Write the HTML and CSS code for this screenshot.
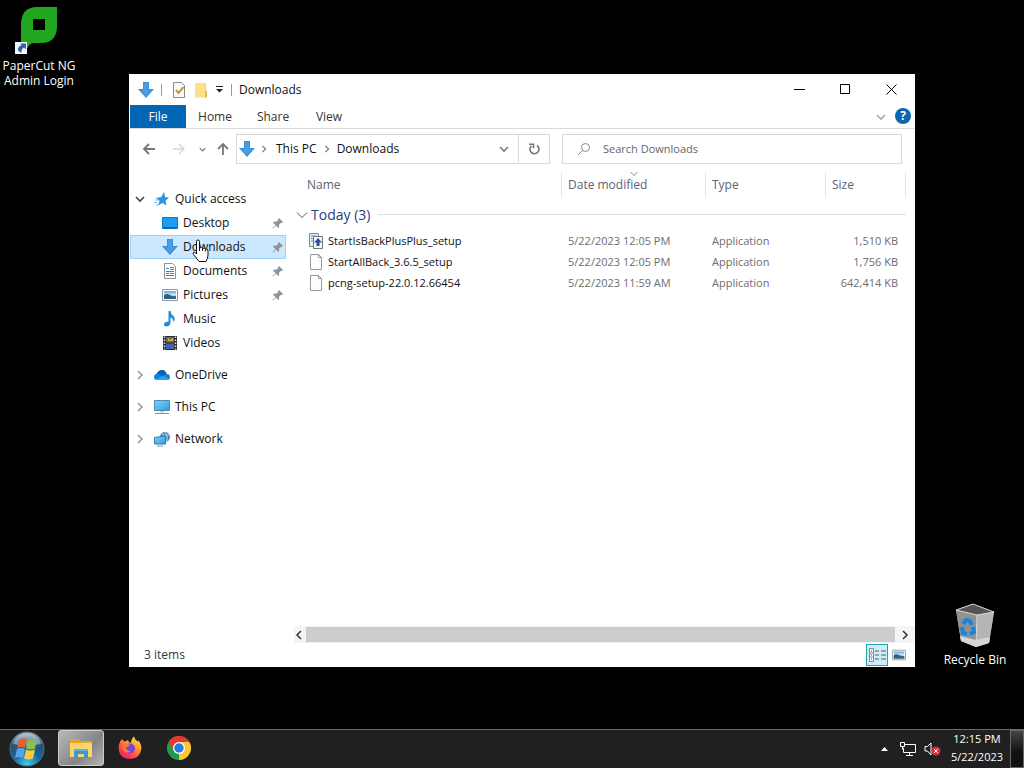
FILE: index.html
```html
<!DOCTYPE html>
<html lang="en">
    <head>
        <meta charset="utf-8">
        <title>Downloads</title>
        <link rel="stylesheet" href="styles.css">
    </head>
    <body>
        <!-- shared icons -->
        <svg class="sprite" aria-hidden="true">
            <defs>
                <linearGradient id="sky" x1="0" y1="0" x2="1" y2="1">
                    <stop offset="0" stop-color="#7fd4fb"/>
                    <stop offset="1" stop-color="#2c9be0"/>
                </linearGradient>
                <linearGradient id="photo" x1="0" y1="0" x2="0" y2="1">
                    <stop offset="0" stop-color="#5ba4dc"/>
                    <stop offset=".5" stop-color="#d5ebf7"/>
                    <stop offset="1" stop-color="#31506b"/>
                </linearGradient>
            </defs>
            <symbol id="arrow-down" viewBox="0 0 16 16">
                <path d="M5 0h6v7h5l-8 9-8-9h5z" fill="#3a8fd9"/>
                <path d="M6 1h4v7h3.500l-5.500 6-5.500-6H6z" fill="#4a9de2"/>
            </symbol>
            <symbol id="chev-right" viewBox="0 0 10 10">
                <path d="M3 1l4 4-4 4" fill="none" stroke="currentColor" stroke-width="1.500"/>
            </symbol>
            <symbol id="chev-down" viewBox="0 0 10 10">
                <path d="M1 3l4 4 4-4" fill="none" stroke="currentColor" stroke-width="1.600"/>
            </symbol>
            <symbol id="pin" viewBox="0 0 12 12">
                <path d="M7 1l4 4-1 1-1-.3-2 2 .2 2.300-1 1L4 8.500 1 11.500l-.5-.5 3-3L1 5.500l1-1 2.300.2 2-2L6 2z" fill="#8b949c"/>
            </symbol>
            <symbol id="file" viewBox="0 0 14 16">
                <path d="M1.500.5h8l3 3v12h-11z" fill="#fdfdfd" stroke="#999"/>
                <path d="M9.500.5v3h3" fill="none" stroke="#999"/>
            </symbol>
            <symbol id="picture" viewBox="0 0 16 12">
                <path d="M.5.5h15v11H.5z" fill="#fff" stroke="#8a98a5"/>
                <path d="M2 2h12v8H2z" fill="url(#photo)"/>
                <path d="M2 6q3-2 6 0t6 1v3H2z" fill="#35607f"/>
            </symbol>
        </svg>

        <main class="desktop">
            <a class="shortcut papercut" href="#">
                <svg width="44" height="50" viewBox="0 0 44 50">
                    <path d="M7 20Q7 2 23 2h20v19q0 17-16 17h-7q-4 0-6 4l-3 4H7z" fill="#22a61f"/>
                    <path d="M19 14h12v11H19z" fill="#000"/>
                    <path d="M1 37h12v12H1z" fill="#f4f6f8"/>
                    <path d="M6 38.500h6v6l-2-2q-3 2-2.500 5-4-1-3.500-4 .5-2 3.500-3.500z" fill="#2d62ad"/>
                </svg>
                <span>PaperCut NG Admin Login</span>
            </a>

            <a class="shortcut recycle" href="#">
                <svg width="40" height="46" viewBox="0 0 40 46">
                    <path d="M1 7l17-6 21 8-5 31-13 4-15-6z" fill="#a2a4a5"/>
                    <path d="M1 7l17-6 21 8-17 3z" fill="#555"/>
                    <path d="M1 7l21 5-1 32-15-6z" fill="#8f9293"/>
                    <path d="M22 12l17-3-5 31-13 4z" fill="#b4b6b6"/>
                    <path d="M5 33l16 4 14-3-1 6-13 4-15-6z" fill="#d5d7d6"/>
                    <path d="M1 7l17-6 21 8-17 3zM22 12l-1 32" fill="none" stroke="#d6d8d8"/>
                    <g fill="none" stroke="#1685dc" stroke-width="4">
                        <path d="M8 21l3-4 4 1 2 4"/>
                        <path d="M7 24l1 6 4 1"/>
                        <path d="M15 31l4-2-1-5"/>
                    </g>
                </svg>
                <span>Recycle Bin</span>
            </a>

            <section class="window">
                <header class="titlebar">
                    <svg class="app-icon" width="16" height="16"><use href="#arrow-down"/></svg>
                    <i class="sep"></i>
                    <button class="quick" aria-label="Properties">
                        <svg width="14" height="16" viewBox="0 0 14 16">
                            <path d="M1.500.5h8l3 3v12h-11z" fill="#fbfbfb" stroke="#888"/>
                            <path d="M4 8l2.500 3 5-6" fill="none" stroke="#c59a32" stroke-width="2"/>
                        </svg>
                    </button>
                    <button class="quick" aria-label="New folder">
                        <svg width="14" height="16" viewBox="0 0 14 16">
                            <path d="M1 1h11v7l1 1v6.500H1z" fill="#f8d775"/>
                            <path d="M1 1h10v14H1z" fill="#ffe08a"/>
                            <path d="M11 9h2v6.500h-2z" fill="#e6b94a"/>
                        </svg>
                    </button>
                    <button class="quick-menu" aria-label="Customize toolbar">
                        <svg width="7" height="7" viewBox="0 0 7 7"><path d="M0 0h7v1H0zM0 3h7L3.500 6.500z" fill="#222"/></svg>
                    </button>
                    <i class="sep"></i>
                    <h1>Downloads</h1>
                    <div class="controls">
                        <button aria-label="Minimize"><svg width="11" height="11" viewBox="0 0 11 11"><path d="M0 5.500h11" stroke="#000"/></svg></button>
                        <button aria-label="Maximize"><svg width="11" height="11" viewBox="0 0 11 11"><path d="M.5.5h9v9h-9z" fill="none" stroke="#000"/></svg></button>
                        <button aria-label="Close"><svg width="11" height="11" viewBox="0 0 11 11"><path d="M.5.5l10 10M10.500.5l-10 10" stroke="#000"/></svg></button>
                    </div>
                </header>

                <nav class="ribbon">
                    <button class="tab file">File</button>
                    <button class="tab">Home</button>
                    <button class="tab">Share</button>
                    <button class="tab view-tab">View</button>
                    <button class="expand" aria-label="Expand ribbon"><svg width="10" height="10"><use href="#chev-down"/></svg></button>
                    <button class="help" aria-label="Help">?</button>
                </nav>

                <div class="toolbar">
                    <button class="go" aria-label="Back">
                        <svg width="14" height="12" viewBox="0 0 14 12"><path d="M13 6H2M7 1L2 6l5 5" fill="none" stroke="#777" stroke-width="1.800"/></svg>
                    </button>
                    <button class="go" aria-label="Forward">
                        <svg width="14" height="12" viewBox="0 0 14 12"><path d="M1 6h11M7 1l5 5-5 5" fill="none" stroke="#d5d5d5" stroke-width="1.400"/></svg>
                    </button>
                    <button class="recent" aria-label="Recent locations"><svg width="7" height="7"><use href="#chev-down"/></svg></button>
                    <button class="up" aria-label="Up">
                        <svg width="12" height="14" viewBox="0 0 12 14"><path d="M6 13V2M1 7l5-5 5 5" fill="none" stroke="#777" stroke-width="1.800"/></svg>
                    </button>
                    <div class="address">
                        <svg width="16" height="16"><use href="#arrow-down"/></svg>
                        <svg class="crumb-sep" width="8" height="8"><use href="#chev-right"/></svg>
                        <button class="crumb">This PC</button>
                        <svg class="crumb-sep" width="8" height="8"><use href="#chev-right"/></svg>
                        <button class="crumb">Downloads</button>
                        <button class="history" aria-label="Previous locations"><svg width="10" height="10"><use href="#chev-down"/></svg></button>
                        <button class="refresh" aria-label="Refresh">
                            <svg width="12" height="12" viewBox="0 0 12 12">
                                <path d="M9 2.500a4.500 4.500 0 1 1-5.500.3" fill="none" stroke="#777" stroke-width="1.600"/>
                                <path d="M1 1.300h4.500v4" fill="none" stroke="#777" stroke-width="1.600"/>
                            </svg>
                        </button>
                    </div>
                    <label class="search">
                        <svg width="14" height="14" viewBox="0 0 14 14">
                            <circle cx="8.500" cy="5.500" r="4" fill="none" stroke="#888"/>
                            <path d="M5.500 8.500L1 13" stroke="#888"/>
                        </svg>
                        <input type="text" placeholder="Search Downloads" aria-label="Search Downloads">
                    </label>
                </div>

                <div class="body">
                    <nav class="tree">
                        <ul>
                            <li>
                                <a href="#">
                                    <svg class="twist open" width="10" height="10"><use href="#chev-down"/></svg>
                                    <svg class="icon" width="16" height="16" viewBox="0 0 16 16">
                                        <path d="M10 1l1 5 4 .7-3.500 3 1 4.800L8.500 12 4 14.500 5.500 10 2 6.700l5-.5z" fill="#2d96e0"/>
                                        <path d="M1 9h3M0 11.500h3M2 14h2" stroke="#71b9ea"/>
                                    </svg>
                                    Quick access
                                </a>
                                <ul>
                                    <li><a href="#">
                                        <svg class="icon" width="16" height="16" viewBox="0 0 16 16"><path d="M.5 2.500h15v11H.5z" fill="#1a9df2" stroke="#0b79c8"/><path d="M1 12h14v1.500H1z" fill="#0c68ab"/></svg>
                                        Desktop
                                        <svg class="pin" width="12" height="12"><use href="#pin"/></svg>
                                    </a></li>
                                    <li><a class="selected" href="#">
                                        <svg class="icon" width="16" height="16"><use href="#arrow-down"/></svg>
                                        Downloads
                                        <svg class="pin" width="12" height="12"><use href="#pin"/></svg>
                                    </a></li>
                                    <li><a href="#">
                                        <svg class="icon" width="16" height="16" viewBox="0 0 16 16">
                                            <path d="M2.500.5h8l3 3v12h-11z" fill="#fff" stroke="#8794a0"/>
                                            <path d="M4 5.500h3M8 4.500h4M8 6.500h4M4 8.500h8M4 10.500h3M8 10.500h4M4 12.500h8" stroke="#3f86bf"/>
                                        </svg>
                                        Documents
                                        <svg class="pin" width="12" height="12"><use href="#pin"/></svg>
                                    </a></li>
                                    <li><a href="#">
                                        <svg class="icon" width="16" height="12"><use href="#picture"/></svg>
                                        Pictures
                                        <svg class="pin" width="12" height="12"><use href="#pin"/></svg>
                                    </a></li>
                                    <li><a href="#">
                                        <svg class="icon" width="16" height="16" viewBox="0 0 16 16">
                                            <path d="M6.500 0h2q0 3 3 5 2.500 2.500 0 6.500 0-4-3-5V12q-1 3.500-4 3.500-3-.3-2.500-2.500.5-2.500 4.500-2.500z" fill="#1f8fdb"/>
                                        </svg>
                                        Music
                                    </a></li>
                                    <li><a href="#">
                                        <svg class="icon" width="16" height="16" viewBox="0 0 16 16">
                                            <path d="M1 1h14v14H1z" fill="#2a2a2e"/>
                                            <path d="M4 2h8v5.500H4z" fill="#6b7053"/>
                                            <path d="M4 8.500h8V14H4z" fill="#4761ad"/>
                                            <path d="M6 3l2 2 3-2v3H6z" fill="#c6b54d"/>
                                            <path d="M2.500 1.500v13M13.500 1.500v13" stroke="#e8e8e8" stroke-width="1.500" stroke-dasharray="1.500 1.500"/>
                                        </svg>
                                        Videos
                                    </a></li>
                                </ul>
                            </li>
                            <li><a href="#">
                                <svg class="twist" width="10" height="10"><use href="#chev-right"/></svg>
                                <svg class="icon" width="16" height="16" viewBox="0 0 16 16">
                                    <path d="M3.500 13Q0 13 0 10t3-3.500Q4.500 3 8 3t4.500 4Q16 7 16 10t-3 3z" fill="#1583d8"/>
                                    <path d="M3 6.500Q4.500 3 8 3t4.500 4L8 9.500z" fill="#0b62b3"/>
                                    <path d="M2 12.500L9 8.500l6 3.500q-1 1-2 1H3.500z" fill="#29a2ea"/>
                                </svg>
                                OneDrive
                            </a></li>
                            <li><a href="#">
                                <svg class="twist" width="10" height="10"><use href="#chev-right"/></svg>
                                <svg class="icon" width="16" height="16" viewBox="0 0 16 16">
                                    <path d="M.5 1.500h15v10H.5z" fill="url(#sky)" stroke="#4c89b3"/>
                                    <path d="M6 12h4v1.500H6z" fill="#c6d0d8"/>
                                    <path d="M1 14.500h14" stroke="#7892a5"/>
                                </svg>
                                This PC
                            </a></li>
                            <li><a href="#">
                                <svg class="twist" width="10" height="10"><use href="#chev-right"/></svg>
                                <svg class="icon" width="16" height="16" viewBox="0 0 16 16">
                                    <circle cx="11" cy="6" r="5" fill="#4b86b8"/>
                                    <path d="M8 3q3 2 7 1M11 1q4 5 1 10" fill="none" stroke="#a9d4ef"/>
                                    <path d="M.5 6.500l11-1.500v8L.5 13z" fill="url(#sky)" stroke="#2e7cae"/>
                                    <path d="M3 15h6" stroke="#7892a5"/>
                                </svg>
                                Network
                            </a></li>
                        </ul>
                    </nav>

                    <div class="content">
                        <table class="files">
                            <colgroup>
                                <col>
                                <col class="col-date">
                                <col class="col-type">
                                <col class="col-size">
                            </colgroup>
                            <thead>
                                <tr>
                                    <th>Name</th>
                                    <th class="sorted">Date modified
                                        <svg class="sort" width="8" height="8" viewBox="0 0 8 8"><path d="M.5 2L4 5.500 7.500 2" fill="none" stroke="#888"/></svg>
                                    </th>
                                    <th>Type</th>
                                    <th>Size</th>
                                </tr>
                            </thead>
                            <tbody>
                                <tr class="group">
                                    <th colspan="4">
                                        <div class="group-title">
                                            <svg width="12" height="12" viewBox="0 0 12 12"><path d="M1 3.500l5 5 5-5" fill="none" stroke="#555"/></svg>
                                            Today (3)
                                        </div>
                                    </th>
                                </tr>
                                <tr>
                                    <td>
                                        <div class="name">
                                            <svg width="16" height="16" viewBox="0 0 16 16">
                                                <path d="M1.500.5h9v13h-9z" fill="#e8eef2" stroke="#7c8a96"/>
                                                <path d="M3 3h5M3 5.500h3M3 8h2" stroke="#6d94b2"/>
                                                <path d="M5.500 3.500h9v12h-9z" fill="#f4f6f8" stroke="#6d7780"/>
                                                <path d="M10 5l4 4.500h-2.500V13h-3V9.500H6z" fill="#27529b"/>
                                            </svg>
                                            StartIsBackPlusPlus_setup
                                        </div>
                                    </td>
                                    <td>5/22/2023 12:05 PM</td>
                                    <td>Application</td>
                                    <td class="size">1,510 KB</td>
                                </tr>
                                <tr>
                                    <td><div class="name"><svg width="16" height="16"><use href="#file"/></svg>StartAllBack_3.6.5_setup</div></td>
                                    <td>5/22/2023 12:05 PM</td>
                                    <td>Application</td>
                                    <td class="size">1,756 KB</td>
                                </tr>
                                <tr>
                                    <td><div class="name"><svg width="16" height="16"><use href="#file"/></svg>pcng-setup-22.0.12.66454</div></td>
                                    <td>5/22/2023 11:59 AM</td>
                                    <td>Application</td>
                                    <td class="size">642,414 KB</td>
                                </tr>
                            </tbody>
                        </table>
                        <div class="scrollbar">
                            <button aria-label="Scroll left"><svg class="flip" width="10" height="10"><use href="#chev-right"/></svg></button>
                            <div class="thumb"></div>
                            <button aria-label="Scroll right"><svg width="10" height="10"><use href="#chev-right"/></svg></button>
                        </div>
                    </div>
                </div>

                <footer class="status">
                    <span>3 items</span>
                    <button class="view active" aria-label="Details view">
                        <svg width="17" height="14" viewBox="0 0 17 14">
                            <path d="M.5.5h4v13h-4zM.5 5h4M.5 9h4" fill="#fff" stroke="#7c8d97"/>
                            <path d="M2 3h1M2 7h1M2 11h1" stroke="#345"/>
                            <path d="M6 3h4M12 3h5M6 7h4M12 7h5M6 11h4M12 11h5" stroke="#53616a"/>
                        </svg>
                    </button>
                    <button class="view" aria-label="Large icons view"><svg width="14" height="12"><use href="#picture"/></svg></button>
                </footer>
            </section>

            <svg class="pointer" width="18" height="24" viewBox="0 0 18 24">
                <path d="M4.500 15V2.500q0-1.500 1.500-1.500t1.500 1.500V9q2.500-1.500 3 .5 2-1 2.800.6 2.700-.6 2.700 1.900v4q0 3-2 6.500H7L1.500 15.500q-1-1.500.2-2.300 1-.5 2.800 1.800zM10.500 9.500V12M13.300 10.500v2M7.500 9v3" fill="#fff" stroke="#111"/>
            </svg>
        </main>

        <footer class="taskbar">
            <button class="start" aria-label="Start">
                <svg width="36" height="36" viewBox="0 0 36 36">
                    <defs>
                        <radialGradient id="orb" cx=".5" cy=".95" r=".9">
                            <stop offset="0" stop-color="#3fd0f5"/>
                            <stop offset=".45" stop-color="#11659f"/>
                            <stop offset=".8" stop-color="#2b506c"/>
                            <stop offset="1" stop-color="#8fa9b8"/>
                        </radialGradient>
                    </defs>
                    <circle cx="18" cy="18" r="17" fill="url(#orb)" stroke="#527183"/>
                    <path d="M4 13Q7 3 18 2q11 1 14 11-14 3-28 0z" fill="#cfdde5" opacity=".5"/>
                    <path d="M10 9q4-3 8-1l-2 9q-4-2-8 0z" fill="#e8602c"/>
                    <path d="M19 8.500q4 2 9 0l-2 9q-4 2-9 0z" fill="#8cc152"/>
                    <path d="M8 18q4-2 8 0l-2 9q-4-2-8 0z" fill="#58a5e4"/>
                    <path d="M17 18.500q4 2 9 0l-2 9q-4 2-9 0z" fill="#fbcb3d"/>
                </svg>
            </button>
            <button class="task active" aria-label="File Explorer">
                <svg width="24" height="20" viewBox="0 0 24 20">
                    <path d="M1 1h9l2 2h11v5H1z" fill="#e5a22c"/>
                    <path d="M1 5h22v14H1z" fill="#fcd668"/>
                    <path d="M5 20v-9h14v9h-4v-4H9v4z" fill="#3797d8"/>
                    <path d="M5 11h14v2H5z" fill="#58b3e8"/>
                </svg>
            </button>
            <button class="task" aria-label="Firefox">
                <svg width="24" height="24" viewBox="0 0 24 24">
                    <defs>
                        <linearGradient id="fox" x1=".9" y1="0" x2=".2" y2="1">
                            <stop offset="0" stop-color="#fff04a"/>
                            <stop offset=".4" stop-color="#ff9528"/>
                            <stop offset=".75" stop-color="#ff3f4e"/>
                            <stop offset="1" stop-color="#e31587"/>
                        </linearGradient>
                    </defs>
                    <path d="M4 3q1 2 3 2.500l3-1.500q0 2 3 3 0-4 3-6.500.5 3 3.500 5l1-1q4 5 2.500 10-2 8-10.500 8.500Q3 23 1 15.500-.5 8 4 3z" fill="url(#fox)"/>
                    <circle cx="12" cy="12.500" r="5" fill="#7446d8"/>
                    <path d="M5 8q4-1 7 1-1 2-4 2 0 4 5 4-4 4-8-1-2-3 0-6z" fill="#ff7a31"/>
                </svg>
            </button>
            <button class="task" aria-label="Chrome">
                <svg width="24" height="24" viewBox="0 0 24 24">
                    <path d="M12 12L1.600 6A12 12 0 0 1 22.400 6z" fill="#e33b2e"/>
                    <path d="M12 12L22.400 6A12 12 0 0 1 12 24z" fill="#fcc934"/>
                    <path d="M12 12v12A12 12 0 0 1 1.600 6z" fill="#26994a"/>
                    <path d="M12 6h10.400L17 15l-5 9 5-9z" fill="#fcc934"/>
                    <path d="M1.600 6L7 15l5 3V6z" fill="#26994a"/>
                    <path d="M1.600 6L6.500 14 12 6h10.400A12 12 0 0 0 1.600 6z" fill="#e33b2e"/>
                    <circle cx="12" cy="12" r="6" fill="#fff"/>
                    <circle cx="12" cy="12" r="4.700" fill="#2878e6"/>
                </svg>
            </button>
            <div class="tray">
                <button aria-label="Show hidden icons"><svg width="7" height="4" viewBox="0 0 7 4"><path d="M0 4l3.500-4L7 4z" fill="#fff"/></svg></button>
                <button aria-label="Network">
                    <svg width="17" height="14" viewBox="0 0 17 14">
                        <path d="M4.500 2.500h11v8H3.500V6M9.500 10.500v3M6 13.500h7" fill="none" stroke="#fff"/>
                        <path d="M.5.500h4v4h-4zM2.500 4.500v3" fill="#202020" stroke="#fff"/>
                    </svg>
                </button>
                <button aria-label="Volume muted">
                    <svg width="17" height="14" viewBox="0 0 17 14">
                        <path d="M1 4.500h2.500L7 1v12L3.500 9H1z" fill="none" stroke="#fff"/>
                        <circle cx="12" cy="9" r="4.500" fill="#d9303e"/>
                        <path d="M10 7l4 4M14 7l-4 4" stroke="#fff"/>
                    </svg>
                </button>
                <button class="clock"><time>12:15 PM<br>5/22/2023</time></button>
                <button class="show-desktop" aria-label="Show desktop"></button>
            </div>
        </footer>
    </body>
</html>
```

FILE: styles.css
```css
* {
    box-sizing: border-box;
}
body {
    margin: 0;
    height: 100vh;
    display: flex;
    flex-direction: column;
    overflow: hidden;
    background: #000;
    color: #111;
    font: 12px/16px "Open Sans", "Noto Sans", sans-serif;
}
button {
    display: flex;
    align-items: center;
    justify-content: center;
    padding: 0;
    border: 0;
    background: none;
    color: inherit;
    font: inherit;
}
a {
    color: inherit;
    text-decoration: none;
}
ul {
    margin: 0;
    padding: 0;
    list-style: none;
}
svg {
    flex: none;
}
.sprite {
    position: absolute;
    width: 0;
    height: 0;
}

/* desktop */
.desktop {
    position: relative;
    flex: 1;
}
.shortcut {
    position: absolute;
    display: flex;
    flex-direction: column;
    align-items: center;
    gap: 3px;
    color: #fff;
    line-height: 15px;
    text-align: center;
}
.papercut {
    top: 5px;
    left: 0;
    width: 78px;
}
.papercut svg {
    margin-right: 6px;
}
.recycle {
    right: 0;
    bottom: 62px;
    width: 98px;
}
.pointer {
    position: absolute;
    top: 239px;
    left: 192px;
}

/* explorer window */
.window {
    position: absolute;
    top: 74px;
    right: 109px;
    bottom: 62px;
    left: 129px;
    display: flex;
    flex-direction: column;
    background: #fff;
}
.titlebar {
    display: flex;
    align-items: center;
    height: 31px;
    padding: 0 1px 0 9px;
}
.titlebar h1 {
    margin: 0 0 0 7px;
    font-size: 12px;
    font-weight: normal;
}
.sep {
    width: 1px;
    height: 12px;
    background: #999;
}
.app-icon {
    margin-right: 7px;
}
.quick {
    width: 22px;
}
.sep + .quick {
    margin-left: 6px;
}
.quick-menu {
    width: 14px;
    margin-right: 5px;
}
.controls {
    display: flex;
    margin-left: auto;
}
.controls button {
    width: 46px;
    height: 30px;
}

.ribbon {
    display: flex;
    height: 24px;
    padding: 0 4px 0 1px;
    border-bottom: 1px solid #dadbdc;
    color: #333;
}
.tab {
    width: 58px;
}
.tab.file {
    width: 56px;
    background: #0366b5;
    color: #fff;
}
.tab.view-tab {
    width: 54px;
}
.expand {
    width: 22px;
    margin-left: auto;
    color: #aaa;
}
.help {
    width: 16px;
    height: 16px;
    margin: 3px 0 0 3px;
    border-radius: 50%;
    background: #0f66b0;
    color: #fff;
    font-weight: bold;
}

.toolbar {
    display: flex;
    height: 40px;
    padding: 5px 13px 5px 5px;
}
.go {
    width: 30px;
}
.recent {
    width: 16px;
    color: #777;
}
.up {
    width: 26px;
}
.address {
    flex: 1;
    display: flex;
    align-items: center;
    padding-left: 2px;
    border: 1px solid #d9d9d9;
    color: #777;
}
.crumb-sep {
    margin: 0 5px;
}
.crumb {
    padding: 0 3px;
    color: #111;
}
.crumb + .crumb-sep {
    margin: 0 3px;
}
.history {
    width: 28px;
    margin-left: auto;
}
.refresh {
    width: 31px;
    align-self: stretch;
    border-left: 1px solid #d9d9d9;
}
.search {
    flex: 1;
    display: flex;
    align-items: center;
    gap: 12px;
    margin-left: 12px;
    padding: 0 14px;
    border: 1px solid #d9d9d9;
}
.search input {
    flex: 1;
    min-width: 0;
    padding: 0;
    border: 0;
    outline: 0;
    background: none;
    font: inherit;
    font-size: 11px;
}
.search input::placeholder {
    color: #666;
    opacity: 1;
}

.body {
    flex: 1;
    display: flex;
    min-height: 0;
}
.tree {
    width: 165px;
    padding: 18px 8px 0 1px;
}
.tree > ul > li {
    margin-bottom: 8px;
}
.tree a {
    display: flex;
    align-items: center;
    height: 24px;
    padding-left: 5px;
}
.tree li li a {
    padding: 0 2px 0 32px;
}
.tree li li .selected {
    padding: 0 1px 0 31px;
    border: 1px solid #99d1ff;
    background: #cce8ff;
}
.tree .icon {
    margin-right: 5px;
}
.twist {
    margin-right: 9px;
    color: #999;
}
.twist.open {
    color: #444;
}
.pin {
    margin-left: auto;
}

.content {
    flex: 1;
    display: flex;
    flex-direction: column;
    min-width: 0;
}
.files {
    width: calc(100% - 9px);
    margin-top: 3px;
    border-collapse: separate;
    border-spacing: 0;
    table-layout: fixed;
    color: #6d6d6d;
}
.col-date {
    width: 144px;
}
.col-type {
    width: 120px;
}
.col-size {
    width: 80px;
}
.files th {
    font-weight: normal;
    text-align: left;
}
.files thead th {
    height: 25px;
    padding: 0 6px;
    border-right: 1px solid #e5e5e5;
    color: #5a6472;
}
.files thead th:first-child {
    padding-left: 13px;
}
.sorted {
    position: relative;
}
.sort {
    position: absolute;
    top: -2px;
    left: calc(50% - 4px);
}
.files td {
    height: 21px;
    padding: 0 8px 0 6px;
    font-size: 11px;
}
.files td:first-child {
    padding-left: 14px;
}
.files .size {
    text-align: right;
}
.name {
    display: flex;
    align-items: center;
    gap: 4px;
    color: #111;
}
.files .group th {
    height: 33px;
    padding: 2px 0 0 2px;
}
.group-title {
    display: flex;
    align-items: center;
    gap: 3px;
    color: #2a3a85;
    font-size: 14px;
}
.group-title::after {
    content: "";
    flex: 1;
    height: 1px;
    margin-left: 5px;
    background: #e2e2e2;
}
.scrollbar {
    display: flex;
    height: 17px;
    margin-top: auto;
    padding: 1px 0;
    background: #f4f4f4;
    color: #333;
}
.scrollbar button {
    width: 20px;
}
.scrollbar button:first-child {
    width: 12px;
    justify-content: flex-start;
}
.flip {
    transform: scaleX(-1);
}
.thumb {
    flex: 1;
    background: #cdcdcd;
}

.status {
    display: flex;
    align-items: center;
    height: 24px;
    padding: 0 5px 0 15px;
    color: #2c3a48;
}
.status span {
    margin-right: auto;
}
.view {
    width: 22px;
    height: 22px;
}
.view.active {
    border: 1px solid #26a0b5;
    background: #cdeef7;
}

/* taskbar */
.taskbar {
    display: flex;
    height: 39px;
    border-top: 1px solid #6b6b6b;
    background: #202020;
    color: #fff;
}
.start {
    width: 54px;
}
.task {
    width: 46px;
    margin: 0 0 2px 3px;
}
.task.active {
    margin-left: 4px;
    border: 1px solid #ccc;
    border-radius: 3px;
    background: linear-gradient(135deg, #b9b9b9, #858585 60%, #b5b5b5);
}
.tray {
    display: flex;
    margin-left: auto;
}
.tray button {
    width: 24px;
}
.tray .clock {
    width: 66px;
    padding-bottom: 2px;
    font-size: 11px;
    line-height: 18px;
}
.tray .show-desktop {
    width: 14px;
    border: 1px solid #666;
    background: linear-gradient(#444, #111 60%);
}
```
